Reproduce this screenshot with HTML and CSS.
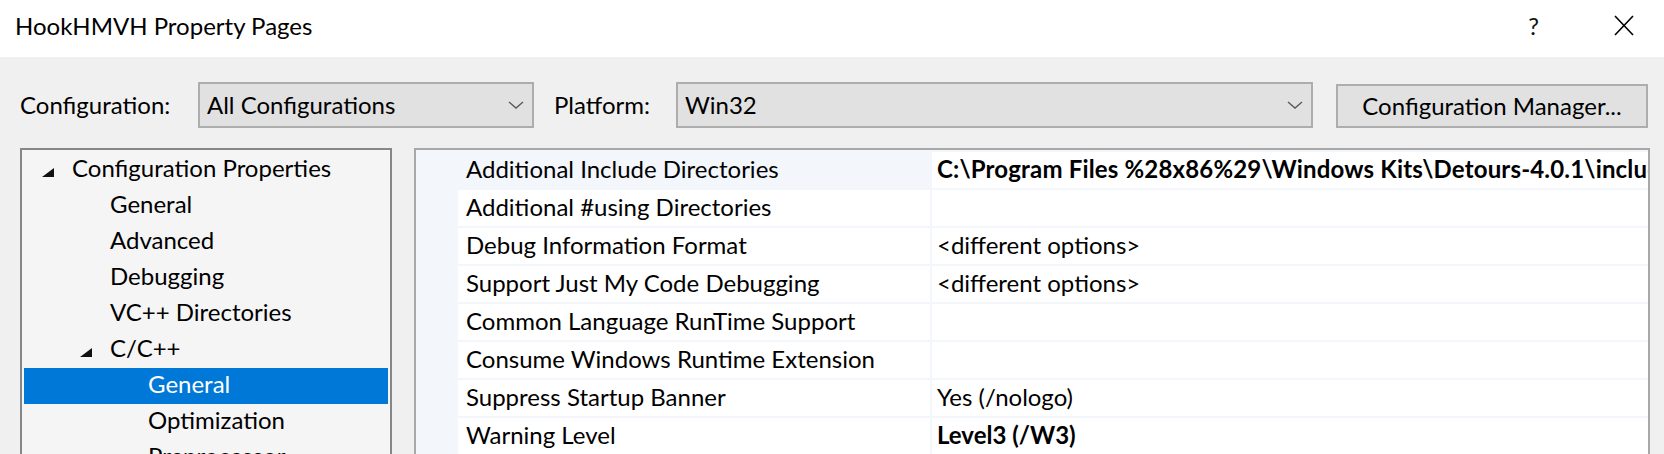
FILE: index.html
```html
<!DOCTYPE html>
<html>
<head>
<meta charset="utf-8">
<title>HookHMVH Property Pages</title>
<link rel="stylesheet" href="styles.css">
</head>
<body>
<div class="window">
  <div class="titlebar">
    <span class="title">HookHMVH Property Pages</span>
    <span class="help">?</span>
    <svg class="close" viewBox="0 0 20 21" aria-hidden="true"><path d="M1 1 L19 20 M19 1 L1 20" stroke="#000" stroke-width="1.6" fill="none"/></svg>
  </div>

  <div class="toolbar">
    <span class="label label-config">Configuration:</span>
    <div class="combo combo-config">
      <span class="combo-text">All Configurations</span>
      <svg class="chev" viewBox="0 0 16 8" aria-hidden="true"><polyline points="1,1 8,7 15,1" fill="none" stroke="#5a5a5a" stroke-width="1.4"/></svg>
    </div>
    <span class="label label-platform">Platform:</span>
    <div class="combo combo-platform">
      <span class="combo-text">Win32</span>
      <svg class="chev" viewBox="0 0 16 8" aria-hidden="true"><polyline points="1,1 8,7 15,1" fill="none" stroke="#5a5a5a" stroke-width="1.4"/></svg>
    </div>
    <button class="btn" type="button">Configuration Manager...</button>
  </div>

  <div class="panes">
    <div class="tree">
      <div class="node l0"><svg class="tri" viewBox="0 0 12 9" aria-hidden="true"><polygon points="12,0 12,9 0,9" fill="#111"/></svg>Configuration Properties</div>
      <div class="node l1">General</div>
      <div class="node l1">Advanced</div>
      <div class="node l1">Debugging</div>
      <div class="node l1">VC++ Directories</div>
      <div class="node l1x"><svg class="tri" viewBox="0 0 12 9" aria-hidden="true"><polygon points="12,0 12,9 0,9" fill="#111"/></svg>C/C++</div>
      <div class="node l2 selected">General</div>
      <div class="node l2">Optimization</div>
      <div class="node l2">Preprocessor</div>
    </div>

    <div class="grid">
      <div class="row first">
        <div class="cell name">Additional Include Directories</div>
        <div class="cell val bold wide">C:\Program Files %28x86%29\Windows Kits\Detours-4.0.1\include</div>
      </div>
      <div class="row">
        <div class="cell name">Additional #using Directories</div>
        <div class="cell val"></div>
      </div>
      <div class="row">
        <div class="cell name">Debug Information Format</div>
        <div class="cell val">&lt;different options&gt;</div>
      </div>
      <div class="row">
        <div class="cell name">Support Just My Code Debugging</div>
        <div class="cell val">&lt;different options&gt;</div>
      </div>
      <div class="row">
        <div class="cell name">Common Language RunTime Support</div>
        <div class="cell val"></div>
      </div>
      <div class="row">
        <div class="cell name">Consume Windows Runtime Extension</div>
        <div class="cell val"></div>
      </div>
      <div class="row">
        <div class="cell name">Suppress Startup Banner</div>
        <div class="cell val">Yes (/nologo)</div>
      </div>
      <div class="row">
        <div class="cell name">Warning Level</div>
        <div class="cell val bold">Level3 (/W3)</div>
      </div>
    </div>
  </div>
</div>
</body>
</html>
```
FILE: styles.css
```css
html, body {
  margin: 0;
  height: 100%;
  overflow: hidden;
}
body {
  background: #f0f0f0;
  font-family: Lato, "Open Sans", sans-serif;
  font-size: 24px;
  color: #000;
}

/* title bar */
.titlebar {
  height: 57px;
  box-sizing: border-box;
  background: #fff;
  display: flex;
  align-items: flex-start;
  padding: 11px 30px 0 15px;
}
.title {
  flex: 1;
  line-height: 29px;
}
.help {
  line-height: 29px;
  margin-right: 75px;
  color: #111;
}
.close {
  width: 20px;
  height: 21px;
  margin-top: 4px;
}

/* toolbar */
.toolbar {
  height: 91px;
  box-sizing: border-box;
  display: flex;
  align-items: center;
  padding: 25px 16px 20px 20px;
}
.label {
  line-height: 29px;
  margin-bottom: 2px;
  white-space: nowrap;
}
.label-config {
  width: 178px;
}
.label-platform {
  width: 122px;
  margin-left: 20px;
}
.combo {
  height: 46px;
  box-sizing: border-box;
  border: 2px solid #adadad;
  background: #e1e1e1;
  display: flex;
  align-items: center;
  padding: 0 8px 2px 7px;
}
.combo-config {
  width: 336px;
}
.combo-platform {
  flex: 1;
}
.combo-text {
  flex: 1;
  line-height: 29px;
  white-space: nowrap;
}
.chev {
  width: 16px;
  height: 8px;
  margin-top: 2px;
}
.btn {
  margin-left: 23px;
  width: 312px;
  height: 44px;
  align-self: flex-end;
  box-sizing: border-box;
  border: 2px solid #adadad;
  background: #e1e1e1;
  font: inherit;
  color: #000;
  line-height: 29px;
  padding: 0 0 2px 0;
}

/* panes */
.panes {
  display: flex;
  gap: 22px;
  padding: 0 14px 0 20px;
  height: 320px;
}
.tree {
  width: 372px;
  box-sizing: border-box;
  border: 2px solid #85878b;
  background: #f5f5f5;
  padding: 2px;
  overflow: hidden;
}
.node {
  height: 36px;
  line-height: 31px;
  white-space: nowrap;
}
.tri {
  width: 12px;
  height: 9px;
  margin-right: 18px;
}
.l0 { padding-left: 18px; }
.l1 { padding-left: 86px; }
.l1x { padding-left: 56px; }
.l2 { padding-left: 124px; }
.selected {
  background: #0078d7;
  color: #fff;
}

.grid {
  flex: 1;
  box-sizing: border-box;
  border: 2px solid #a8a8a8;
  background: #f3f6fa;
  padding: 2px 0 0 42px;
  overflow: hidden;
}
.row {
  display: grid;
  grid-template-columns: 472px 1fr;
  column-gap: 2px;
  height: 36px;
  margin-bottom: 2px;
  line-height: 33px;
}
.cell {
  background: #fff;
  overflow: hidden;
  white-space: nowrap;
}
.name {
  padding-left: 8px;
}
.val {
  padding-left: 5px;
}
.first .name {
  background: transparent;
}
.bold {
  font-weight: 700;
}
.wide {
  letter-spacing: 0.17px;
}
```
